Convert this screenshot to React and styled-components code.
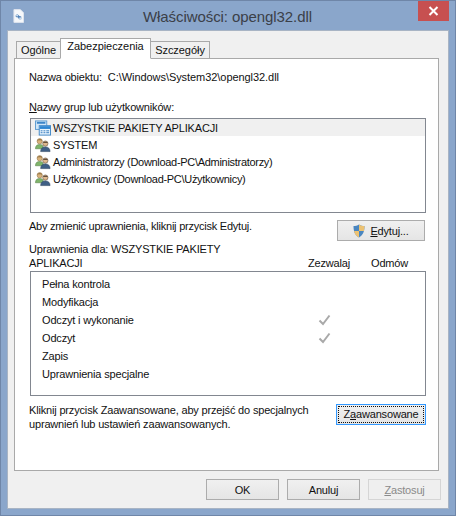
import React from 'react';
import styled, { createGlobalStyle } from 'styled-components';

const rows = ['Pełna kontrola', 'Modyfikacja', 'Odczyt i wykonanie', 'Odczyt', 'Zapis', 'Uprawnienia specjalne'];
const checked = ['Odczyt i wykonanie', 'Odczyt'];
const users = [
  { name: 'WSZYSTKIE PAKIETY APLIKACJI', app: true },
  { name: 'SYSTEM' },
  { name: 'Administratorzy (Download-PC\\Administratorzy)', tight: true },
  { name: 'Użytkownicy (Download-PC\\Użytkownicy)', tight: true },
];

const FileIcon = () => (
  <svg width="11" height="14" viewBox="0 0 12 15">
    <path d="M1 .5h7l3.500 3.500v10.500h-10.500z" fill="#f6f8fb" stroke="#dfe5ee" />
    <path d="M3 6.500l2-1 2 2 2 .5v3h-2.500l-1-2-2.500-.5z" fill="#4f80b8" />
    <circle cx="4.500" cy="7" r="1.100" fill="#cfe0f0" />
    <circle cx="7.800" cy="10" r="1.100" fill="#cfe0f0" />
  </svg>
);

const AppIcon = () => (
  <svg width="16" height="16" viewBox="0 0 17 16">
    <rect x=".5" y=".5" width="12" height="9" fill="#cfe6f8" stroke="#5b9bd0" />
    <path d="M2 2.500h9" stroke="#3d86c8" strokeWidth="2" />
    <rect x="4.500" y="5.500" width="12" height="10" fill="#eaf5fd" stroke="#3d86c8" />
    <path d="M5 7.500h11" stroke="#2f86d2" strokeWidth="3" />
    <path d="M6 11h2M9 11h2M12 11h3M6 13h2M9 13h2M12 13h3" stroke="#2f78bd" />
  </svg>
);

const GroupIcon = () => (
  <svg width="16" height="16" viewBox="0 0 17 16">
    <circle cx="5" cy="4" r="2.800" fill="#d9b27a" stroke="#94784f" strokeWidth=".6" />
    <path d="M2.300 3.500c.5-2 4.800-2.200 5.400 0-1.800-.6-3.600-.6-5.400 0z" fill="#8a6a3e" />
    <path d="M.5 12c0-3 1.500-4.500 4.500-4.500s4 1.500 4 4.500z" fill="#7fb56a" stroke="#567f48" strokeWidth=".6" />
    <circle cx="11" cy="6.500" r="2.800" fill="#dfb88d" stroke="#5b4a38" strokeWidth=".6" />
    <path d="M8.300 6c.5-2 4.800-2.200 5.400 0-1.800-.6-3.600-.6-5.400 0z" fill="#3c3026" />
    <path d="M6 15c0-3 1.700-5 5-5s5 2 5 5z" fill="#3f5f85" stroke="#2a4461" strokeWidth=".6" />
  </svg>
);

const ShieldIcon = () => (
  <svg width="12" height="14" viewBox="0 0 12 14">
    <path d="M6 .5c1.700 1.200 3.500 1.600 5.500 1.600 0 5.500-1.500 9.400-5.500 11.400C2 11.500.5 7.600.5 2.100 2.500 2.100 4.300 1.700 6 .5z" fill="#4a86c0" />
    <path d="M6 .5c1.700 1.200 3.500 1.600 5.500 1.600 0 1.800-.2 3.500-.5 4.900H6zM6 7v6.500C3.300 12.200 1.700 10 1 7z" fill="#ecc273" />
  </svg>
);

const CheckIcon = () => (
  <svg width="13" height="12" viewBox="0 0 13 12">
    <path d="M1.500 6.500l3.500 3.500 6.500-8.500" fill="none" stroke="#a9a9a9" strokeWidth="2" />
  </svg>
);

const App = () => (
  <>
    <GlobalStyle />
    <Window>
      <TitleBar>
        <FileIcon />
        <Title>Właściwości: opengl32.dll</Title>
        <CloseButton>
          <svg width="11" height="10" viewBox="0 0 11 10">
            <path d="M1.500 1l8 8M9.500 1l-8 8" stroke="#fff" strokeWidth="2" />
          </svg>
        </CloseButton>
      </TitleBar>
      <Client>
        <Tabs>
          <Tab>Ogólne</Tab>
          <Tab $active>Zabezpieczenia</Tab>
          <Tab $last>Szczegóły</Tab>
        </Tabs>
        <Panel>
          <ObjectRow>
            <span>Nazwa obiektu:</span>
            <PathText>C:\Windows\System32\opengl32.dll</PathText>
          </ObjectRow>
          <GroupLabel>
            <u>N</u>azwy grup lub użytkowników:
          </GroupLabel>
          <UserList>
            {users.map((user) => (
              <UserRow key={user.name} $selected={user.app} $tight={user.tight}>
                {user.app ? <AppIcon /> : <GroupIcon />}
                <span>{user.name}</span>
              </UserRow>
            ))}
          </UserList>
          <EditRow>
            <EditText>Aby zmienić uprawnienia, kliknij przycisk Edytuj.</EditText>
            <EditButton>
              <ShieldIcon />
              <span>
                <u>E</u>dytuj...
              </span>
            </EditButton>
          </EditRow>
          <PermHeader>
            <PermFor>Uprawnienia dla: WSZYSTKIE PAKIETY APLIKACJI</PermFor>
            <AllowHead>Zezwalaj</AllowHead>
            <DenyHead>Odmów</DenyHead>
          </PermHeader>
          <PermBox>
            {rows.map((row) => (
              <PermRow key={row}>
                <span>{row}</span>
                <AllowCell>{checked.includes(row) && <CheckIcon />}</AllowCell>
              </PermRow>
            ))}
          </PermBox>
          <AdvancedRow>
            <AdvancedText>
              Kliknij przycisk Zaawansowane, aby przejść do specjalnych uprawnień lub ustawień zaawansowanych.
            </AdvancedText>
            <AdvancedButton>
              <AdvancedInner>
                Z<u>a</u>awansowane
              </AdvancedInner>
            </AdvancedButton>
          </AdvancedRow>
        </Panel>
        <Footer>
          <FooterButton>OK</FooterButton>
          <FooterButton>Anuluj</FooterButton>
          <FooterButton $disabled>
            <u>Z</u>astosuj
          </FooterButton>
        </Footer>
      </Client>
    </Window>
  </>
);

const GlobalStyle = createGlobalStyle`
  html, body {
    margin: 0;
    padding: 0;
    background: #8aa6cb;
  }
  body {
    font-family: "Liberation Sans", Arial, sans-serif;
    font-size: 11px;
    letter-spacing: -0.17px;
    color: #111111;
  }
`;
const Window = styled.div`
  width: 456px;
  height: 516px;
  box-sizing: border-box;
  display: flex;
  flex-direction: column;
  padding: 0 6px 6px;
  background: #8aa6cb;
  border: 1px solid #6f86a8;
`;
const TitleBar = styled.div`
  position: relative;
  display: flex;
  align-items: center;
  height: 29px;
  flex: none;
  padding-left: 6px;
`;
const Title = styled.div`
  flex: 1;
  text-align: center;
  margin-right: 18px;
  margin-top: 1px;
  font-size: 15px;
  letter-spacing: -0.08px;
  color: #3b4048;
`;
const CloseButton = styled.div`
  position: absolute;
  top: 0;
  right: 0;
  width: 31px;
  height: 20px;
  display: flex;
  align-items: center;
  justify-content: center;
  background: #c75050;
`;
const Client = styled.div`
  flex: 1;
  display: flex;
  flex-direction: column;
  box-sizing: border-box;
  padding: 0 9px 8px 6px;
  background: #f0f0f0;
  border: 1px solid #a8b4c4;
`;
const Tabs = styled.div`
  display: flex;
  align-items: flex-end;
  height: 28px;
  padding-left: 2px;
  flex: none;
  position: relative;
  z-index: 1;
  margin-bottom: -1px;
`;
const Tab = styled.div`
  box-sizing: border-box;
  position: relative;
  height: ${(p) => (p.$active ? '21px' : '18px')};
  padding-top: ${(p) => (p.$active ? '1px' : '2px')};
  width: ${(p) => (p.$active ? '91px' : p.$last ? '60px' : '45px')};
  white-space: nowrap;
  text-align: center;
  letter-spacing: -0.05px;
  background: ${(p) => (p.$active ? '#ffffff' : '#f0f0f0')};
  border: 1px solid #a9a9a9;
  border-bottom-color: ${(p) => (p.$active ? '#ffffff' : '#a9a9a9')};
  margin-left: ${(p) => (p.$active || p.$last ? '-1px' : '0')};
  z-index: ${(p) => (p.$active ? 2 : 1)};
`;
const Panel = styled.div`
  box-sizing: border-box;
  height: 413px;
  flex: none;
  padding: 0 12px 0 14px;
  display: flex;
  flex-direction: column;
  background: #ffffff;
  border: 1px solid #a9a9a9;
`;
const ObjectRow = styled.div`
  display: flex;
  gap: 6px;
  margin-top: 10px;
  height: 16px;
  line-height: 16px;
`;
const PathText = styled.span`
  letter-spacing: -0.06px;
`;
const GroupLabel = styled.div`
  margin-top: 14px;
  height: 16px;
  line-height: 16px;
`;
const UserList = styled.div`
  box-sizing: border-box;
  height: 95px;
  margin: 3px 0 0 1px;
  border: 1px solid #828790;
`;
const UserRow = styled.div`
  display: flex;
  align-items: center;
  gap: 2px;
  height: 17px;
  padding-left: 4px;
  letter-spacing: ${(p) => (p.$tight ? '-0.3px' : '-0.17px')};
  background: ${(p) => (p.$selected ? '#f0f0f0' : 'transparent')};
`;
const EditRow = styled.div`
  display: flex;
  justify-content: space-between;
  align-items: flex-start;
  height: 21px;
  margin-top: 7px;
  padding-right: 1px;
  line-height: 12px;
`;
const EditText = styled.span`
  letter-spacing: -0.23px;
`;
const BaseButton = styled.div`
  box-sizing: border-box;
  display: flex;
  align-items: center;
  justify-content: center;
  height: 21px;
  background: linear-gradient(#f0f0f0, #e5e5e5);
  border: 1px solid #acacac;
`;
const EditButton = styled(BaseButton)`
  width: 88px;
  gap: 5px;
`;
const PermHeader = styled.div`
  display: flex;
  align-items: flex-end;
  height: 29px;
  line-height: 14px;
`;
const PermFor = styled.div`
  width: 210px;
  margin-right: 69px;
`;
const AllowHead = styled.div`
  width: 63px;
`;
const DenyHead = styled.div``;
const PermBox = styled.div`
  box-sizing: border-box;
  height: 125px;
  margin: 1px 0 0 1px;
  padding: 3px 11px;
  border: 1px solid #828790;
`;
const PermRow = styled.div`
  display: grid;
  grid-template-columns: 272px 20px;
  align-items: center;
  height: 18px;
`;
const AllowCell = styled.div`
  display: flex;
  justify-content: center;
`;
const AdvancedRow = styled.div`
  display: flex;
  justify-content: space-between;
  align-items: flex-start;
  margin-top: 8px;
`;
const AdvancedText = styled.div`
  width: 296px;
  margin-top: -1px;
  line-height: 14px;
`;
const AdvancedButton = styled(BaseButton)`
  width: 90px;
  border: 1px solid #3399ff;
  padding: 1px;
`;
const AdvancedInner = styled.div`
  flex: 1;
  align-self: stretch;
  text-align: center;
  line-height: 15px;
  border: 1px dotted #111111;
`;
const Footer = styled.div`
  display: flex;
  justify-content: flex-end;
  gap: 8px;
  margin-top: 8px;
  margin-right: -2px;
`;
const FooterButton = styled(BaseButton)`
  width: 73px;
  color: ${(p) => (p.$disabled ? '#8a8a8a' : '#111111')};
  border-color: ${(p) => (p.$disabled ? '#d5d5d5' : '#acacac')};
  background: ${(p) => (p.$disabled ? '#efefef' : 'linear-gradient(#f0f0f0, #e5e5e5)')};
`;

export default App;
